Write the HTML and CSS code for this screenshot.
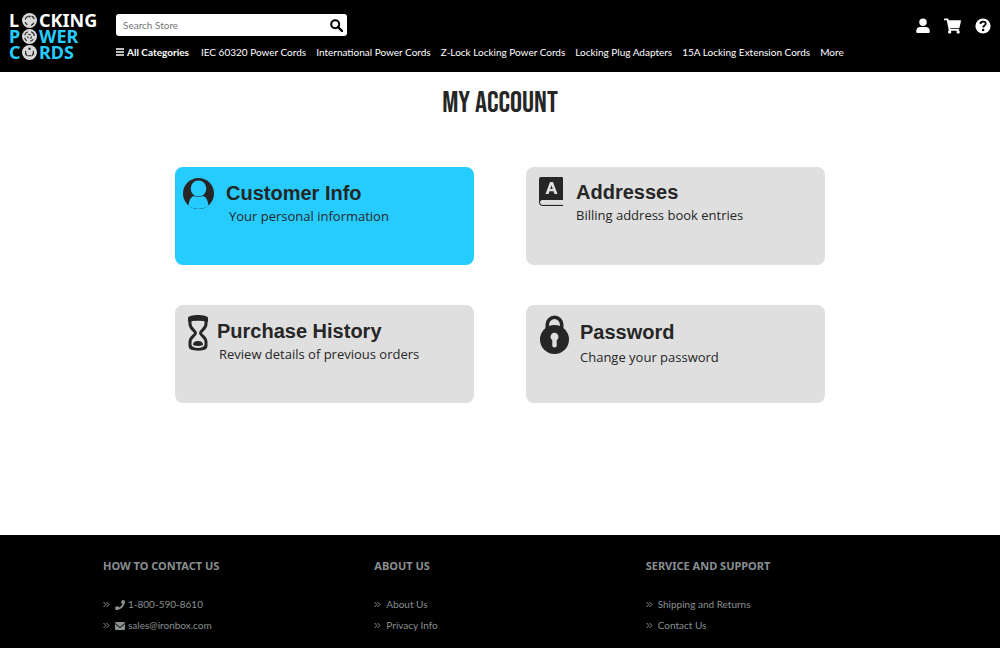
FILE: index.html
```html
<!DOCTYPE html>
<html lang="en">
<head>
<meta charset="utf-8">
<meta name="viewport" content="width=device-width, initial-scale=1">
<title>My Account</title>
<link rel="stylesheet" href="styles.css">
</head>
<body>
<header class="header">
  <a class="logo" href="#">
    <span class="logo-row logo-white"><span>L</span>
      <svg class="plug" viewBox="0 0 28 28" aria-hidden="true"><circle cx="14" cy="14" r="14" fill="#d8d8d8"/><path d="M6 12a9 9 0 0 1 5-6M18 6a9 9 0 0 1 5 5M22 18a9 9 0 0 1-5 5M10 22a8 8 0 0 1-4-5" fill="none" stroke="#222" stroke-width="2.400"/><path d="M12 5h4v3h-4z" fill="#222"/></svg>
      <span>CKING</span></span>
    <span class="logo-row"><span>P</span>
      <svg class="plug" viewBox="0 0 28 28" aria-hidden="true"><circle cx="14" cy="14" r="14" fill="#d8d8d8"/><path d="M5 12a9 9 0 0 1 6-7M17 5a9 9 0 0 1 6 8M21 19a9 9 0 0 1-6 4M9 22a9 9 0 0 1-4-6M12 10l4 1M18 14l-2 4M10 14l2 3" fill="none" stroke="#222" stroke-width="2"/></svg>
      <span>WER</span></span>
    <span class="logo-row"><span>C</span>
      <svg class="plug" viewBox="0 0 28 28" aria-hidden="true"><circle cx="14" cy="14" r="14" fill="#d8d8d8"/><path d="M9 20a9 9 0 0 1-2-9M21 11a9 9 0 0 1-2 9M10 20h8" fill="none" stroke="#222" stroke-width="2.200"/><path d="M12 5h4v4h-4z" fill="#222"/></svg>
      <span>RDS</span></span>
  </a>
  <div class="header-main">
    <form class="search" role="search">
      <input class="search-input" type="search" placeholder="Search Store" aria-label="Search Store">
      <button class="search-button" type="submit" aria-label="Search">
        <svg viewBox="0 0 13 13" aria-hidden="true"><circle cx="5.2" cy="5.2" r="4" fill="none" stroke="#000" stroke-width="2"/><path d="M8 8l4 4" stroke="#000" stroke-width="2.4" stroke-linecap="round"/></svg>
      </button>
    </form>
    <nav class="nav" aria-label="Categories">
      <a class="nav-all" href="#"><svg viewBox="0 0 8 8" aria-hidden="true"><path d="M0 1h8M0 4h8M0 7h8" stroke="#fff" stroke-width="1.300"/></svg>All Categories</a>
      <a href="#">IEC 60320 Power Cords</a>
      <a href="#">International Power Cords</a>
      <a href="#">Z-Lock Locking Power Cords</a>
      <a href="#">Locking Plug Adapters</a>
      <a href="#">15A Locking Extension Cords</a>
      <a href="#">More</a>
    </nav>
  </div>
  <div class="tools">
    <a href="#" aria-label="Account"><svg viewBox="0 0 14 16" width="14" height="16"><circle cx="7" cy="4.3" r="3.7" fill="#fff"/><path d="M4 9h6a4 4 0 0 1 3.700 3.500v1.500a1 1 0 0 1-1 1H1.300a1 1 0 0 1-1-1v-1.500A4 4 0 0 1 4 9z" fill="#fff"/></svg></a>
    <a href="#" aria-label="Cart"><svg viewBox="0 0 576 512" width="17" height="16"><path fill="#fff" d="M528.120 301.319l47.273-208C578.806 78.301 567.391 64 551.990 64H159.208l-9.166-44.810C147.758 8.021 137.930 0 126.529 0H24C10.745 0 0 10.745 0 24v16c0 13.255 10.745 24 24 24h69.883l70.248 343.435C147.325 417.100 136 435.222 136 456c0 30.928 25.072 56 56 56s56-25.072 56-56c0-15.674-6.447-29.835-16.824-40h209.647C430.447 426.165 424 440.326 424 456c0 30.928 25.072 56 56 56s56-25.072 56-56c0-22.172-12.888-41.332-31.579-50.405l5.517-24.276c3.413-15.018-8.002-29.319-23.403-29.319H218.117l-6.545-32h293.145c11.206 0 20.920-7.754 23.403-18.681z"/></svg></a>
    <a href="#" aria-label="Help"><svg viewBox="0 0 16 16" width="16" height="16"><circle cx="8" cy="8" r="7.600" fill="#fff"/><path d="M5.400 5.900C5.600 3 10.700 2.800 10.700 5.700c0 1.900-2.500 1.800-2.500 3.900" fill="none" stroke="#000" stroke-width="1.900"/><circle cx="8.100" cy="12" r="1.300" fill="#000"/></svg></a>
  </div>
</header>

<main class="main">
  <h1 class="title">MY ACCOUNT</h1>
  <div class="cards">
    <a class="card card-info" href="#">
      <svg class="card-icon" viewBox="0 0 31 31" width="31" height="31" aria-hidden="true"><circle cx="15.500" cy="15.500" r="15.500" fill="#262626"/><ellipse cx="15.500" cy="10.500" rx="7.800" ry="8" fill="#26ccff"/><path d="M5.500 28C6 22 8 18.800 11 18q4.500 2 9 0c3 .8 5 4 5.500 10q-10 6-20 0z" fill="#26ccff"/></svg>
      <div><h2>Customer Info</h2><p>Your personal information</p></div>
    </a>
    <a class="card card-address" href="#">
      <svg class="card-icon" viewBox="0 0 25 30" width="25" height="30" aria-hidden="true"><path d="M2 0h21q1 0 1 1v22H3.500a2.300 2.300 0 0 0 0 4.800H24V29H4q-4 0-4-4V2q0-2 2-2z" fill="#262626"/><path d="M1.500 25.500q0-2 2-2H24v4H3.500q-2 0-2-2z" fill="#dfdfdf"/><path fill-rule="evenodd" d="M6.500 17L11 5h3l4.500 12h-3l-1-2.700h-4L9.500 17zM11.300 12h2.400l-1.200-3.700z" fill="#dfdfdf"/></svg>
      <div><h2>Addresses</h2><p>Billing address book entries</p></div>
    </a>
    <a class="card card-history" href="#">
      <svg class="card-icon" viewBox="0 0 20 36" width="20" height="36" aria-hidden="true"><path d="M2 3.500v5.500c0 5 5.500 6.500 5.500 9S2 22 2 27v4c0 4 16 4 16 0v-4c0-5-5.500-6.500-5.500-9S18 14 18 9V3.500" fill="none" stroke="#262626" stroke-width="3"/><path d="M0 3C0-1 20-1 20 3v4q-10-2.500-20 0zM1 29h18v3c0 4.500-18 4.500-18 0z" fill="#262626"/><ellipse cx="10" cy="29.500" rx="6.500" ry="3.600" fill="#dfdfdf"/><path d="M5 30q0-4 5-4t5 4q-5 2-10 0z" fill="#262626"/></svg>
      <div><h2>Purchase History</h2><p>Review details of previous orders</p></div>
    </a>
    <a class="card card-password" href="#">
      <svg class="card-icon" viewBox="0 0 29 39" width="29" height="39" aria-hidden="true"><path d="M7.300 14V9.500a7.200 7.200 0 0 1 14.400 0V14" fill="none" stroke="#262626" stroke-width="3.600"/><circle cx="14.500" cy="24.500" r="14.500" fill="#262626"/><path d="M12.300 25.200a4 4 0 1 1 4.400 0v6q-2.200 2.800-4.400 0z" fill="#dfdfdf"/></svg>
      <div><h2>Password</h2><p>Change your password</p></div>
    </a>
  </div>
</main>

<footer class="footer">
  <div class="footer-inner">
    <section>
      <h3>HOW TO CONTACT US</h3>
      <ul>
        <li><a class="contact" href="#"><svg class="chevrons" viewBox="0 0 7 7" aria-hidden="true"><path d="M.5 1L3 3.500.500 6M3.500 1L6 3.500 3.500 6"/></svg><svg class="contact-icon" viewBox="0 0 512 512" aria-hidden="true"><path d="M493.400 24.600l-104-24c-11.300-2.600-22.900 3.300-27.500 13.900l-48 112c-4.200 9.800-1.400 21.300 6.900 28l60.600 49.600c-36 76.700-98.900 140.500-177.200 177.200l-49.600-60.600c-6.800-8.300-18.200-11.100-28-6.900l-112 48C3.900 366.500-2 378.100.600 389.400l24 104C27.100 504.200 36.700 512 48 512c256.100 0 464-207.500 464-464 0-11.200-7.700-20.900-18.600-23.400z"/></svg>1-800-590-8610</a></li>
        <li><a class="contact" href="#"><svg class="chevrons" viewBox="0 0 7 7" aria-hidden="true"><path d="M.5 1L3 3.500.500 6M3.500 1L6 3.500 3.500 6"/></svg><svg class="contact-icon" viewBox="0 0 10 10" aria-hidden="true"><path d="M1 1h8q1 0 1 1L5 6 0 2q0-1 1-1zM0 3l5 4 5-4V8q0 1-1 1H1Q0 9 0 8z"/></svg>sales@ironbox.com</a></li>
      </ul>
    </section>
    <section>
      <h3>ABOUT US</h3>
      <ul>
        <li><a href="#"><svg class="chevrons" viewBox="0 0 7 7" aria-hidden="true"><path d="M.5 1L3 3.500.500 6M3.500 1L6 3.500 3.500 6"/></svg>About Us</a></li>
        <li><a href="#"><svg class="chevrons" viewBox="0 0 7 7" aria-hidden="true"><path d="M.5 1L3 3.500.500 6M3.500 1L6 3.500 3.500 6"/></svg>Privacy Info</a></li>
      </ul>
    </section>
    <section>
      <h3>SERVICE AND SUPPORT</h3>
      <ul>
        <li><a href="#"><svg class="chevrons" viewBox="0 0 7 7" aria-hidden="true"><path d="M.5 1L3 3.500.500 6M3.500 1L6 3.500 3.500 6"/></svg>Shipping and Returns</a></li>
        <li><a href="#"><svg class="chevrons" viewBox="0 0 7 7" aria-hidden="true"><path d="M.5 1L3 3.500.500 6M3.500 1L6 3.500 3.500 6"/></svg>Contact Us</a></li>
      </ul>
    </section>
  </div>
</footer>
</body>
</html>
```

FILE: styles.css
```css
* { box-sizing: border-box; }
body {
  margin: 0;
  min-height: 100vh;
  display: flex;
  flex-direction: column;
  font: 10px/14px Lato, "Open Sans", sans-serif;
  color: #262626;
  background: #fff;
}
a { color: inherit; text-decoration: none; }
h1, h2, h3, p, ul { margin: 0; padding: 0; }
ul { list-style: none; }

.header {
  display: flex;
  align-items: flex-start;
  padding: 12px 9px;
  background: #000;
  color: #fff;
}
.logo {
  flex: 0 0 107px;
  font: bold 18px/16px "Noto Sans", sans-serif;
  color: #26ccff;
}
.logo-row {
  display: grid;
  grid-template-columns: 11px 15px auto;
  column-gap: 2px;
  align-items: center;
  justify-content: start;
}
.logo-white { color: #fff; }
.plug { display: block; width: 15px; height: 15px; }
.header-main { flex: 1; padding-top: 2px; }
.search {
  display: flex;
  width: 231px;
  height: 22px;
  background: #fff;
  border-radius: 3px;
}
.search-input {
  flex: 1;
  min-width: 0;
  padding: 0 7px;
  border: 0;
  background: none;
  font: inherit;
  outline: none;
}
.search-input::placeholder { color: #757575; opacity: 1; }
.search-button {
  display: flex;
  align-items: center;
  padding: 0 4px;
  border: 0;
  background: none;
}
.search-button svg { width: 13px; height: 13px; }
.nav {
  display: flex;
  flex-wrap: wrap;
  gap: 0 10px;
  padding-top: 9px;
}
.nav-all {
  display: flex;
  align-items: center;
  gap: 3px;
  padding-right: 2px;
  font-weight: bold;
}
.nav-all svg { width: 8px; height: 8px; }
.tools { display: flex; gap: 14px; padding-top: 6px; }
.tools svg { display: block; }

.main { flex: 1; padding: 17px 20px 40px; }
.title {
  font: 30px/28px "Bebas Neue", "Roboto Condensed", Roboto, sans-serif;
  text-align: center;
}
.cards {
  display: grid;
  grid-template-columns: 1fr 1fr;
  gap: 40px 52px;
  max-width: 650px;
  margin: 50px auto 0;
}
.card {
  display: flex;
  align-items: flex-start;
  min-height: 98px;
  padding: 10px 12px;
  border-radius: 8px;
  background: #dfdfdf;
}
.card-icon { flex: none; }
.card h2 { font: bold 20px/24px "Liberation Sans", Arial, sans-serif; }
.card p { font: 13px/22px "Open Sans", sans-serif; }
.card div { padding-top: 3px; }
.card-info { gap: 12px; padding: 11px 8px; background: #26ccff; }
.card-info p { padding-left: 3px; }
.card-address { gap: 12px; padding-left: 13px; }
.card-history { gap: 9px; padding-left: 13px; }
.card-history p { padding-left: 2px; }
.card-history div { padding-top: 4px; }
.card-password { gap: 11px; padding-left: 14px; }
.card-password div { padding-top: 5px; }
.card-password p { padding-top: 2px; }

.footer { padding: 22px 20px 12px; background: #000; color: #899090; }
.footer-inner {
  display: grid;
  grid-template-columns: repeat(3, 1fr);
  max-width: 814px;
  margin: 0 auto;
}
.footer section { padding-left: 10px; }
.footer h3 {
  margin-bottom: 19px;
  font: bold 11px/18px "Noto Sans", "Open Sans", sans-serif;
}
.footer li { line-height: 21px; }
.footer li a { display: flex; align-items: center; gap: 5px; }
.footer .contact { gap: 3px; }
.contact .chevrons { margin-right: 2px; }
.chevrons { width: 7px; height: 7px; fill: none; stroke: currentColor; }
.contact-icon { width: 10px; height: 10px; fill: currentColor; }
```
